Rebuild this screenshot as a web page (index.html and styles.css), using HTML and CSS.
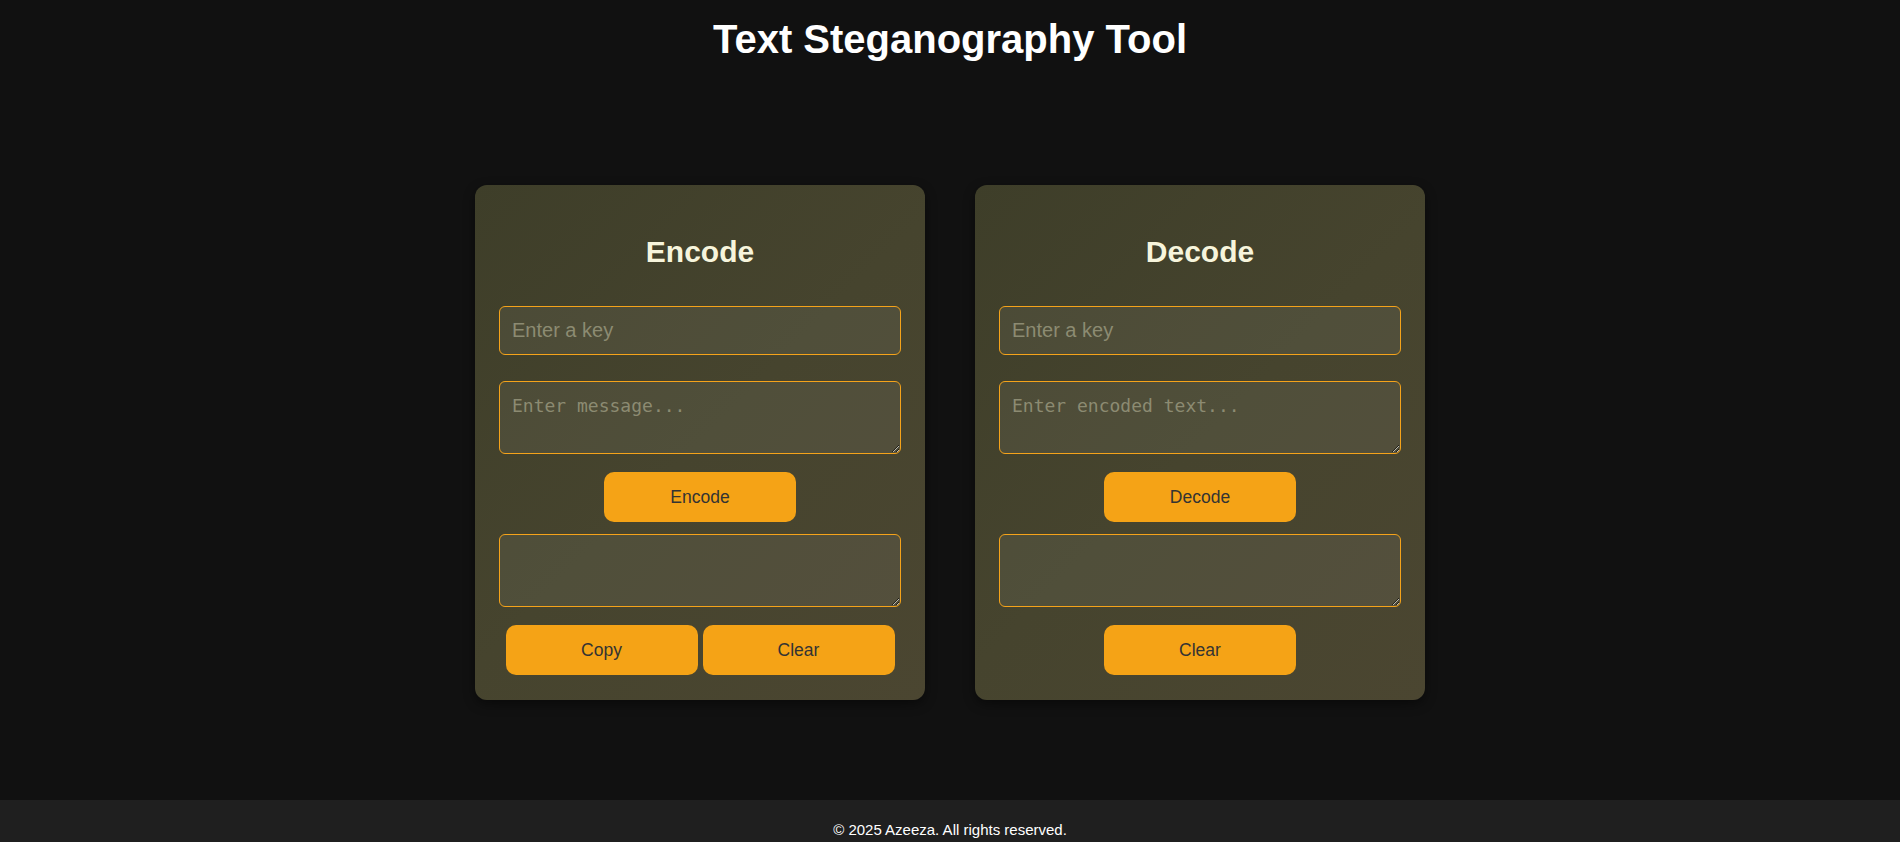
FILE: index.html
```html
<!DOCTYPE html>
<html lang="en">
<head>
<meta charset="utf-8">
<title>Text Steganography Tool</title>
<link rel="stylesheet" href="styles.css">
</head>
<body>
<header class="header">
  <h1 class="title">Text Steganography Tool</h1>
</header>
<main class="panels">
  <section class="card">
    <h2 class="card-title">Encode</h2>
    <input class="field" type="text" placeholder="Enter a key">
    <textarea class="area" placeholder="Enter message..."></textarea>
    <button class="btn btn-main">Encode</button>
    <textarea class="area area-out"></textarea>
    <div class="btn-row">
      <button class="btn">Copy</button>
      <button class="btn">Clear</button>
    </div>
  </section>
  <section class="card">
    <h2 class="card-title">Decode</h2>
    <input class="field" type="text" placeholder="Enter a key">
    <textarea class="area" placeholder="Enter encoded text..."></textarea>
    <button class="btn btn-main">Decode</button>
    <textarea class="area area-out"></textarea>
    <div class="btn-row">
      <button class="btn">Clear</button>
    </div>
  </section>
</main>
<footer class="footer">
  <p class="footer-text">© 2025 Azeeza. All rights reserved.</p>
</footer>
</body>
</html>
```
FILE: styles.css
```css
* { box-sizing: border-box; }

body {
  margin: 0;
  background: #111111;
  font-family: "Liberation Sans", Arial, sans-serif;
  color: #ffffff;
}

.header {
  padding-top: 16px;
  text-align: center;
}

.title {
  margin: 0;
  font-size: 40px;
  line-height: 46px;
  font-weight: 700;
  color: #ffffff;
}

.panels {
  display: flex;
  justify-content: center;
  gap: 50px;
  margin: 123px 0 100px;
}

.card {
  width: 450px;
  padding: 25px 24px;
  border-radius: 12px;
  background: linear-gradient(135deg, #3e3e29 0%, #46442e 50%, #4b4631 100%);
  box-shadow: 0 4px 12px rgba(0, 0, 0, 0.45);
  display: flex;
  flex-direction: column;
  align-items: center;
}

.card-title {
  margin: 25px 0 37px;
  font-size: 30px;
  line-height: 34px;
  font-weight: 700;
  color: #f7f5dc;
}

.field {
  display: block;
  width: 100%;
  height: 49px;
  padding: 0 12px;
  border: 1px solid #f5a31a;
  border-radius: 6px;
  background: rgba(255, 255, 255, 0.06);
  color: #eeeeee;
  font-family: "Liberation Sans", Arial, sans-serif;
  font-size: 20px;
  outline: none;
}

.area {
  display: block;
  width: 100%;
  height: 73px;
  margin-top: 26px;
  padding: 13px 12px;
  border: 1px solid #f5a31a;
  border-radius: 6px;
  background: rgba(255, 255, 255, 0.06);
  color: #eeeeee;
  font-family: "DejaVu Sans Mono", "Liberation Mono", monospace;
  font-size: 18px;
  line-height: 22px;
  outline: none;
}

.area-out {
  margin-top: 12px;
}

.field::placeholder,
.area::placeholder {
  color: #8c8b72;
}

.btn {
  width: 192px;
  height: 50px;
  border: none;
  border-radius: 10px;
  background: #f5a316;
  color: #333333;
  font-family: "Liberation Sans", Arial, sans-serif;
  font-size: 17.5px;
  cursor: pointer;
}

.btn-main {
  margin-top: 18px;
}

.btn-row {
  display: flex;
  justify-content: center;
  gap: 5px;
  margin-top: 18px;
}

.footer {
  background: #1f1f1f;
  padding: 21px 0 20px;
  text-align: center;
}

.footer-text {
  margin: 0;
  font-size: 15px;
  line-height: 17px;
  color: #ffffff;
}
```
